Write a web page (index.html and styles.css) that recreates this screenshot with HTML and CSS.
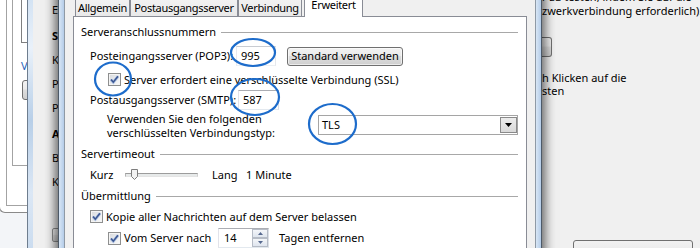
FILE: index.html
```html
<!DOCTYPE html>
<html lang="de">
<head>
    <meta charset="UTF-8">
    <title>Internet-E-Mail-Einstellungen - Erweitert</title>
    <link rel="stylesheet" href="styles.css">
</head>
<body>
    <div class="desktop">

        <!-- Kontenliste ganz hinten -->
        <div class="win win-list">
            <div class="pane pane-outer">
                <div class="pane pane-inner">
                    <div class="pane pane-top"></div>
                    <span class="link">V</span>
                    <span class="btn btn-list"></span>
                </div>
            </div>
        </div>

        <!-- Konto hinzufügen -->
        <div class="win win-account">
            <div class="glass"></div>
            <div class="account-body">
                <div class="field-col">
                    <span class="field">E</span>
                    <span class="field section">S</span>
                    <span class="field">K</span>
                    <span class="field">P</span>
                    <span class="field">P</span>
                    <span class="field section">A</span>
                    <span class="field">B</span>
                    <span class="field">K</span>
                    <span class="btn btn-field"></span>
                </div>
                <div class="test-col">
                    <p class="test-text">r zu testen, indem Sie auf die<br>zwerkverbindung erforderlich).</p>
                    <span class="btn btn-test"></span>
                    <p class="test-text test-note">h Klicken auf die<br>sten</p>
                    <span class="btn btn-next"></span>
                </div>
            </div>
        </div>

        <!-- Dialog: Weitere Einstellungen -->
        <div class="dialog">
            <div class="glass"></div>
            <div class="dialog-body">
                <div class="tabs">
                    <span class="tab tab-general">Allgemein</span>
                    <span class="tab tab-smtp">Postausgangsserver</span>
                    <span class="tab tab-conn">Verbindung</span>
                    <span class="tab active">Erweitert</span>
                </div>
                <div class="tab-panel">
                    <div class="group-title">Serveranschlussnummern<i class="group-line"></i></div>
                    <div class="group">
                        <div class="row row-pop">
                            <span class="port-label">Posteingangsserver (POP3):</span>
                            <span class="textbox port-pop">995</span>
                            <button class="button">Standard verwenden</button>
                        </div>
                        <div class="row row-ssl">
                            <span class="check"><svg viewBox="0 0 13 13" width="13" height="13"><path d="M3 6.6l2.3 2.6L10 3.3" fill="none" stroke="#a9bde0" stroke-width="2.8"/><path d="M3 6.6l2.3 2.6L10 3.3" fill="none" stroke="#3a5590" stroke-width="1.5"/></svg></span>
                            <span class="check-label">Server erfordert eine verschlüsselte Verbindung (SSL)</span>
                        </div>
                        <div class="row row-smtp">
                            <span class="port-label smtp-label">Postausgangsserver (SMTP):</span>
                            <span class="textbox port-smtp">587</span>
                        </div>
                        <div class="row row-type">
                            <span class="type-label">Verwenden Sie den folgenden<br>verschlüsselten Verbindungstyp:</span>
                            <span class="combo">
                                TLS
                                <span class="combo-btn"><svg viewBox="0 0 7 4" width="7" height="4"><path d="M0 0h7L3.5 4z" fill="#000"/></svg></span>
                            </span>
                        </div>
                    </div>

                    <div class="group-title title-timeout">Servertimeout<i class="group-line"></i></div>
                    <div class="group">
                        <div class="row row-slider">
                            <span class="slider-min">Kurz</span>
                            <span class="slider">
                                <svg class="thumb" viewBox="0 0 7 11" width="7" height="11"><path d="M0.5 0.5h6v7L3.5 10.5 0.5 7.5z" fill="#f2f2f2" stroke="#7d7d7d"/></svg>
                            </span>
                            <span class="slider-max">Lang</span>
                            <span>1 Minute</span>
                        </div>
                    </div>

                    <div class="group-title title-send">Übermittlung<i class="group-line"></i></div>
                    <div class="group">
                        <div class="row row-copy">
                            <span class="check"><svg viewBox="0 0 13 13" width="13" height="13"><path d="M3 6.6l2.3 2.6L10 3.3" fill="none" stroke="#a9bde0" stroke-width="2.8"/><path d="M3 6.6l2.3 2.6L10 3.3" fill="none" stroke="#3a5590" stroke-width="1.5"/></svg></span>
                            <span class="check-label">Kopie aller Nachrichten auf dem Server belassen</span>
                        </div>
                        <div class="row row-delete">
                            <span class="check"><svg viewBox="0 0 13 13" width="13" height="13"><path d="M3 6.6l2.3 2.6L10 3.3" fill="none" stroke="#a9bde0" stroke-width="2.8"/><path d="M3 6.6l2.3 2.6L10 3.3" fill="none" stroke="#3a5590" stroke-width="1.5"/></svg></span>
                            <span class="check-label days-label">Vom Server nach</span>
                            <span class="spin">
                                <span class="spin-value">14</span>
                                <span class="spin-btns">
                                    <span class="spin-btn"><svg viewBox="0 0 5 3" width="5" height="3"><path d="M0 3h5L2.5 0z" fill="#56698f"/></svg></span>
                                    <span class="spin-btn"><svg viewBox="0 0 5 3" width="5" height="3"><path d="M0 0h5L2.5 3z" fill="#56698f"/></svg></span>
                                </span>
                            </span>
                            <span class="days-after">Tagen entfernen</span>
                        </div>
                    </div>
                </div>
            </div>
            <div class="glass"></div>
        </div>

        <!-- Markierungen -->
        <svg class="marks" viewBox="0 0 700 248" width="700" height="248">
            <ellipse cx="253" cy="52.5" rx="22" ry="13.5"/>
            <ellipse cx="113" cy="79" rx="18" ry="16.5"/>
            <ellipse cx="255" cy="97" rx="24" ry="18"/>
            <ellipse cx="332.5" cy="124" rx="23.5" ry="20"/>
        </svg>
    </div>
</body>
</html>
```

FILE: styles.css
```css
* {
    box-sizing: border-box;
}

body {
    margin: 0;
    font-family: "Noto Sans", "Open Sans", sans-serif;
    font-size: 11px;
    line-height: 14px;
    color: #000;
}

.desktop {
    position: relative;
    width: 700px;
    height: 248px;
    overflow: hidden;
    background-color: #f3f5f8;
}

/* Fenster im Hintergrund */

.win {
    position: absolute;
}

.win-list {
    left: -1px;
    top: -10px;
    width: 29px;
    height: 223px;
    padding-left: 6px;
    background-color: #fff;
    border-left: 1px solid #8a8a8a;
    border-bottom: 1px solid #8a8a8a;
    border-bottom-left-radius: 6px;
}

.pane {
    border-left: 1px solid #a3a3a3;
    border-bottom: 1px solid #a3a3a3;
}

.pane-outer {
    height: 216px;
    padding-left: 5px;
}

.pane-inner {
    height: 176px;
    padding-left: 8px;
}

.pane-top {
    height: 53px;
    border-color: #7f7f7f;
}

.link {
    display: block;
    margin-top: 16px;
    color: #1f5fb8;
}

.btn {
    display: block;
    border: 1px solid #707070;
    border-radius: 3px;
    background: linear-gradient(#f2f2f2, #ebebeb 45%, #dddddd 50%, #cfcfcf);
}

.btn-list {
    width: 20px;
    height: 20px;
    margin: 7px 0 0 1px;
}

.win-account {
    left: 27px;
    top: -10px;
    right: 0;
    height: 290px;
    display: flex;
    background-color: #f0f0f0;
}

.glass {
    width: 6px;
    border-left: 1px solid #6e7d8e;
    background: linear-gradient(#cfe0f2, #e9f1fa 20%, #b8cfe8 45%, #dbe7f5 70%, #c2d6ec);
}

.account-body {
    flex: 1;
    display: flex;
    padding-left: 19px;
}

.field-col {
    display: flex;
    flex-direction: column;
    padding-top: 13px;
}

.field {
    margin-top: 10px;
}

.field:first-child {
    margin-top: 0;
}

.section {
    margin-top: 12px;
    font-weight: bold;
}

.btn-field {
    width: 40px;
    height: 14px;
    margin-top: 39px;
    border-color: #8e8f8f;
    border-radius: 2px;
}

.test-col {
    margin-left: auto;
    width: 158px;
}

.test-text {
    margin: 0;
    line-height: 14px;
    white-space: nowrap;
}

.test-note {
    margin-top: 14px;
    line-height: 13px;
}

.btn-test {
    width: 10px;
    height: 20px;
    margin-top: 19px;
    border-left: none;
    border-radius: 0 3px 3px 0;
}

.btn-next {
    width: 120px;
    height: 24px;
    margin: 143px 0 0 31px;
}

/* Dialog */

.dialog {
    position: absolute;
    left: 58px;
    top: -10px;
    width: 484px;
    height: 290px;
    display: flex;
    border: 1px solid #4d5a68;
    box-shadow: 0 0 10px 3px rgba(0, 0, 0, 0.6);
}

.dialog .glass {
    width: 5px;
    border-left: none;
    background: linear-gradient(90deg, #d8e6f5, #b4cce8);
}

.dialog-body {
    flex: 1;
    padding: 0 8px;
    background-color: #f0f0f0;
    border-left: 1px solid #8e99a5;
    border-right: 1px solid #8e99a5;
}

.tabs {
    display: flex;
    align-items: flex-end;
    height: 25px;
    padding-left: 2px;
}

.tab {
    height: 21px;
    padding-top: 5px;
    text-align: center;
    letter-spacing: -0.3px;
    border: 1px solid #898c95;
    border-bottom: none;
    background: linear-gradient(#f4f4f4, #e9e9e9);
    white-space: nowrap;
}

.tab-general {
    width: 55px;
}

.tab-smtp {
    width: 108px;
}

.tab-conn {
    width: 64px;
}

.tab.active {
    position: relative;
    z-index: 1;
    width: 59px;
    height: 24px;
    margin: 0 0 -1px 2px;
    padding-top: 4px;
    background: #fff;
}

.tab-panel {
    height: 270px;
    padding: 0 8px 0 7px;
    background-color: #fff;
    border: 1px solid #898c95;
}

.group-title {
    display: flex;
    align-items: center;
    height: 16px;
    margin-top: 7px;
}

.title-timeout {
    margin-top: 6px;
}

.title-send {
    margin-top: 5px;
}

.group-line {
    flex: 1;
    margin-left: 5px;
    border-top: 1px solid #a8a8a8;
}

.group {
    padding-left: 9px;
}

.row {
    display: flex;
    align-items: center;
    white-space: nowrap;
}

.row-pop {
    height: 22px;
    margin-top: 5px;
}

.port-label {
    width: 146px;
}

.smtp-label {
    width: 148px;
}

.textbox {
    display: flex;
    align-items: center;
    height: 20px;
    padding-left: 4px;
    background-color: #fff;
    border: 1px solid;
    border-color: #abadb3 #dbdfe6 #e3e9ef #e2e3ea;
}

.port-pop {
    width: 40px;
    border-color: #c9ccd2 #e6e8ec #eceff2 #e8e9ee;
}

.port-smtp {
    width: 41px;
}

.button {
    width: 116px;
    height: 19px;
    margin-left: 11px;
    padding: 0;
    font: inherit;
    color: #000;
    border: 1px solid #707070;
    border-radius: 3px;
    background: linear-gradient(#f2f2f2, #ebebeb 45%, #dddddd 50%, #cfcfcf);
    box-shadow: inset 0 0 0 1px rgba(255, 255, 255, 0.6);
}

.row-ssl {
    height: 15px;
    margin-top: 5px;
    padding-left: 18px;
}

.check {
    display: flex;
    width: 13px;
    height: 13px;
    border: 1px solid #8e8f8f;
    background: linear-gradient(135deg, #d6d9dd, #fbfbfb);
    box-shadow: inset 0 0 0 1px #f4f4f4;
}

.check svg {
    margin: -1px;
}

.check-label {
    margin-left: 3px;
}

.row-smtp {
    height: 20px;
    margin-top: 3px;
}

.row-type {
    align-items: flex-start;
    height: 28px;
    margin-top: 2px;
}

.type-label {
    padding-left: 17px;
}

.combo {
    display: flex;
    align-items: center;
    width: 200px;
    height: 20px;
    margin: 3px 0 0 auto;
    padding-left: 3px;
    border: 1px solid #a5a5a5;
}

.combo-btn {
    display: flex;
    align-items: center;
    justify-content: center;
    width: 17px;
    height: 16px;
    margin-left: auto;
    border: 1px solid #8a8a8a;
    background: linear-gradient(#ececec, #d9d9d9);
}

.row-slider {
    height: 16px;
    margin-top: 5px;
}

.slider-min {
    width: 35px;
}

.slider {
    position: relative;
    width: 73px;
    height: 4px;
    border: 1px solid;
    border-color: #9c9c9c #d0d0d0 #e4e4e4 #b4b4b4;
    background-color: #e7eaea;
}

.thumb {
    position: absolute;
    left: 5px;
    top: -5px;
}

.slider-max {
    width: 34px;
    margin-left: 14px;
}

.row-copy {
    height: 15px;
    margin-top: 5px;
}

.row-delete {
    height: 20px;
    margin-top: 4px;
    padding-left: 18px;
}

.days-label {
    width: 94px;
}

.spin {
    display: flex;
    width: 51px;
    height: 20px;
    border: 1px solid;
    border-color: #abadb3 #dbdfe6 #e3e9ef #e2e3ea;
}

.spin-value {
    flex: 1;
    padding-left: 5px;
    line-height: 18px;
}

.spin-btns {
    display: flex;
    flex-direction: column;
    width: 16px;
}

.spin-btn {
    flex: 1;
    display: flex;
    align-items: center;
    justify-content: center;
    border: 1px solid #b6bcc6;
    background: linear-gradient(#f4f6f9, #dfe5ee);
}

.days-after {
    margin-left: 10px;
}

/* Markierungen */

.marks {
    position: absolute;
    left: 0;
    top: 0;
    pointer-events: none;
}

.marks ellipse {
    fill: none;
    stroke: #1d6ccb;
    stroke-width: 2.2;
}
```
